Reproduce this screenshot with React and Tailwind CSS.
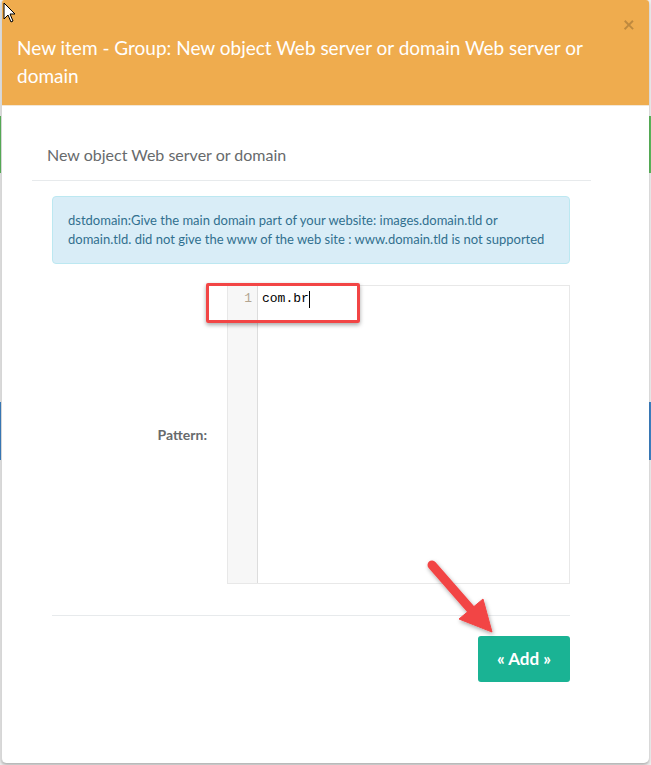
import React from "react";

const lato = { fontFamily: "Lato, 'Open Sans', sans-serif" };

export default function App() {
  return (
    <div
      className="relative w-[651px] h-[765px] overflow-hidden bg-[#eeeeee]"
      style={lato}
    >
      {/* background page glimpses behind the modal */}
      <div className="absolute left-0 top-[116px] w-[2px] h-[57px] bg-[#5cb85c]" />
      <div className="absolute left-0 top-[402px] w-[2px] h-[58px] bg-[#3d82c4]" />
      <div className="absolute right-0 top-[116px] w-[2px] h-[57px] bg-[#5cb85c]" />
      <div className="absolute right-0 top-[402px] w-[2px] h-[58px] bg-[#3d82c4]" />

      <div className="relative ml-[1px] w-[648px] h-[763px] bg-white rounded-b-[5px] rounded-t-[3px] border-l border-[#d6d6d6] shadow-[0_2px_3px_rgba(0,0,0,0.25)] overflow-hidden">
        {/* header */}
        <div className="relative h-[106px] bg-[#efac4e] border-b border-[#f3e7d6] pl-[15px] pr-[40px] pt-[34px]">
          <h4 className="text-white text-[19px] leading-[28px] font-normal">
            New item - Group: New object Web server or domain Web server or domain
          </h4>
          <button className="absolute top-[13px] right-[14px] text-[21px] leading-none font-bold text-black opacity-20">
            ×
          </button>
        </div>

        {/* body */}
        <div className="ml-[30px] w-[559px] mt-[24px] py-[15px] pl-[15px] border-b border-[#e7eaec] text-[16px] leading-[20px] text-[#676a6c]">
          New object Web server or domain
        </div>

        <div className="ml-[50px] w-[518px]">
          <div className="mt-[15px] rounded-[4px] border border-[#bce8f1] bg-[#d9edf7] px-[15px] py-[14px] text-[13px] leading-[19px] text-[#31708f]">
            dstdomain:Give the main domain part of your website: images.domain.tld or
            domain.tld. did not give the www of the web site : www.domain.tld is not supported
          </div>

          <div className="mt-[21px] flex">
            <label className="w-[155px] self-center text-right text-[14px] font-bold text-[#676a6c]">
              Pattern:
            </label>
            <div className="ml-[20px] flex w-[343px] h-[299px] border border-[#e8e8e8] bg-white">
              <div className="w-[30px] h-full bg-[#f7f7f7] border-r border-[#dddddd] pt-[4px] pr-[5px] text-right text-[13px] leading-[18px] text-[#b3a591]" style={{ fontFamily: "'Liberation Mono', monospace" }}>
                1
              </div>
              <div className="pl-[4px] pt-[4px] text-[13px] leading-[18px] text-black flex items-start" style={{ fontFamily: "'Liberation Mono', monospace" }}>
                <span>com.br</span>
                <span className="inline-block w-px h-[17px] bg-black mt-[1px]" />
              </div>
            </div>
          </div>

          <div className="mt-[31px] border-t border-[#e7eaec]" />

          <div className="mt-[20px] flex justify-end">
            <button className="w-[92px] h-[46px] rounded-[3px] bg-[#1ab394] text-white text-[17px] font-bold">
              « Add »
            </button>
          </div>
        </div>
      </div>

      {/* red highlight annotation */}
      <div className="absolute left-[206px] top-[283px] w-[154px] h-[40px] border-[3px] border-[#f24545] rounded-[2px] shadow-[0_2px_4px_rgba(0,0,0,0.35)]" />

      {/* red arrow annotation */}
      <svg className="absolute left-0 top-0" width="651" height="765" style={{ pointerEvents: "none" }}>
        <defs>
          <filter id="sh" x="-20%" y="-20%" width="140%" height="140%">
            <feDropShadow dx="1" dy="2" stdDeviation="2" floodColor="#000" floodOpacity="0.35" />
          </filter>
        </defs>
        <g filter="url(#sh)" fill="#f24545" stroke="#f24545">
          <line x1="432" y1="565" x2="474" y2="613" strokeWidth="9" strokeLinecap="round" />
          <polygon points="492,632 459,619 483,599" strokeWidth="1" strokeLinejoin="round" />
        </g>
      </svg>

      {/* mouse pointer */}
      <svg className="absolute left-[3px] top-[2px]" width="14" height="22" viewBox="0 0 14 22">
        <path d="M1 1 L1 17 L5 13 L8 20 L10 19 L7 12 L12 12 Z" fill="white" stroke="black" strokeWidth="1" strokeLinejoin="round" />
      </svg>
    </div>
  );
}
